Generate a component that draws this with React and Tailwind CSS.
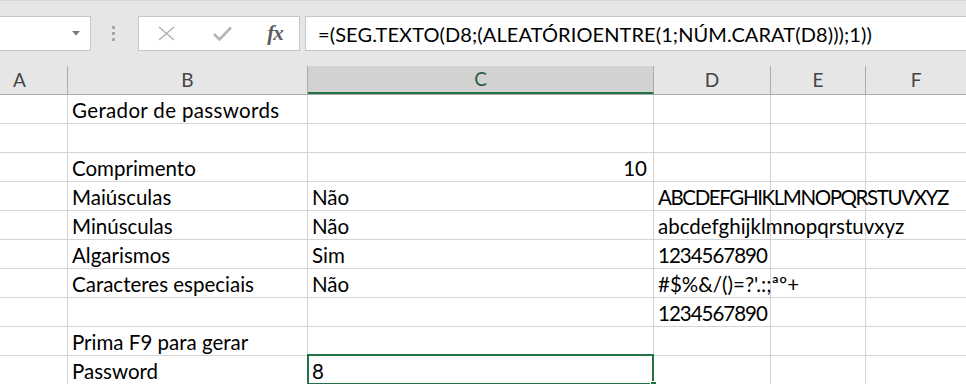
import React from "react";

const cols = [68, 240, 346, 117, 95, 100];
const heads = ["A", "B", "C", "D", "E", "F"];

const UP = "tracking-[-1.4px]";
const DIG = "tracking-[-1px]";

const rows = [
  ["", { t: "Gerador de passwords", c: "tracking-[0.35px]" }, "", "", "", ""],
  ["", "", "", "", "", ""],
  ["", "Comprimento", { r: "10" }, "", "", ""],
  ["", "Maiúsculas", "Não", { t: "ABCDEFGHIKLMNOPQRSTUVXYZ", c: UP }, "", ""],
  ["", "Minúsculas", "Não", "abcdefghijklmnopqrstuvxyz", "", ""],
  ["", "Algarismos", "Sim", { t: "1234567890", c: DIG }, "", ""],
  ["", "Caracteres especiais", "Não", "#$%&/()=?'.:;ªº+", "", ""],
  ["", "", "", { t: "1234567890", c: DIG }, "", ""],
  ["", "Prima F9 para gerar", "", "", "", ""],
  ["", "Password", { sel: "8" }, "", "", ""],
];

const font = { fontFamily: "Lato, 'Noto Sans', sans-serif" };

export default function App() {
  return (
    <div className="w-[966px] h-[384px] overflow-hidden bg-white text-black" style={font}>
      {/* toolbar */}
      <div className="h-[66px] bg-[#e6e6e6] border-t border-[#d6d6d6] flex items-start pt-[15px]">
        <div className="w-[91px] h-[35px] bg-white border border-l-0 border-[#c6c6c6] flex items-center justify-end pr-[10px]">
          <svg width="8" height="5" viewBox="0 0 8 5">
            <path d="M0 0 L8 0 L4 4.5 Z" fill="#7a7a7a" />
          </svg>
        </div>
        <div className="w-[47px] h-[35px] flex flex-col items-center justify-center gap-[3px] pr-[2px]">
          <div className="w-[3px] h-[3px] bg-[#a6a6a6]" />
          <div className="w-[3px] h-[3px] bg-[#a6a6a6]" />
          <div className="w-[3px] h-[3px] bg-[#a6a6a6]" />
        </div>
        <div className="w-[162px] h-[35px] bg-white border border-[#c6c6c6] flex items-center">
          <div className="w-[54px] flex justify-center pl-[1px]">
            <svg width="17" height="15" viewBox="0 0 17 15">
              <path d="M1 1 L16 14 M16 1 L1 14" stroke="#b4b4b4" strokeWidth="1.6" fill="none" />
            </svg>
          </div>
          <div className="w-[54px] flex justify-center pl-[4px]">
            <svg width="19" height="15" viewBox="0 0 19 15">
              <path d="M1 8 L6.5 13.5 L18 1.5" stroke="#b4b4b4" strokeWidth="2.6" fill="none" />
            </svg>
          </div>
          <div className="flex-1 flex justify-center pl-[4px]">
            <span
              className="italic font-bold text-[21px] leading-none text-[#5c5c5c] tracking-[-1px]"
              style={{ fontFamily: "'Liberation Serif', serif" }}
            >
              fx
            </span>
          </div>
        </div>
        <div className="ml-[5px] flex-1 h-[35px] bg-white border border-r-0 border-[#c6c6c6] flex items-center pl-[12px]">
          <span className="text-[20px] leading-none whitespace-nowrap tracking-[0.1px]">
            =(SEG.TEXTO(D8;(ALEATÓRIOENTRE(1;NÚM.CARAT(D8)));1))
          </span>
        </div>
      </div>

      {/* column headers */}
      <div className="flex h-[29px] bg-[#e6e6e6] border-b border-[#ababab]">
        {heads.map((h, i) => (
          <div
            key={h}
            style={{ width: cols[i] }}
            className={
              "h-full flex items-center text-[19px] " +
              (i === 0 ? "justify-start pl-[13px] " : "justify-center ") +
              (i < 5 ? "border-r border-[#ababab] " : "") +
              (i === 2
                ? "bg-[#d2d2d2] text-[#2b5e40] border-b-2 border-b-[#217346] -mb-[1px]"
                : "text-[#444444]")
            }
          >
            {h}
          </div>
        ))}
      </div>

      {/* cells */}
      <div className="flex flex-col">
        {rows.map((row, ri) => (
          <div key={ri} className="flex h-[29px] shrink-0">
            {row.map((c, ci) => {
              const isObj = typeof c === "object";
              return (
                <div
                  key={ci}
                  style={{ width: cols[ci] }}
                  className={
                    "relative h-full border-b border-[#d4d4d4] flex items-end pb-[1px] text-[20.5px] leading-[24px] whitespace-nowrap " +
                    (ci < 5 ? "border-r " : "") +
                    (isObj && c.r ? "justify-end pr-[6px] " : "pl-[4px] ") +
                    (ci === 3 ? "overflow-visible z-10 " : "")
                  }
                >
                  {isObj ? (
                    c.t ? <span className={c.c}>{c.t}</span> : (c.r || c.sel)
                  ) : (
                    c
                  )}
                  {isObj && c.sel && (
                    <>
                      <div className="absolute -top-[2px] -left-[1px] -right-[1px] -bottom-[1px] border-2 border-[#217346] pointer-events-none" />
                      <div className="absolute -right-[4px] -bottom-[4px] w-[7px] h-[7px] bg-[#217346] border border-white" />
                    </>
                  )}
                </div>
              );
            })}
          </div>
        ))}
      </div>
    </div>
  );
}
